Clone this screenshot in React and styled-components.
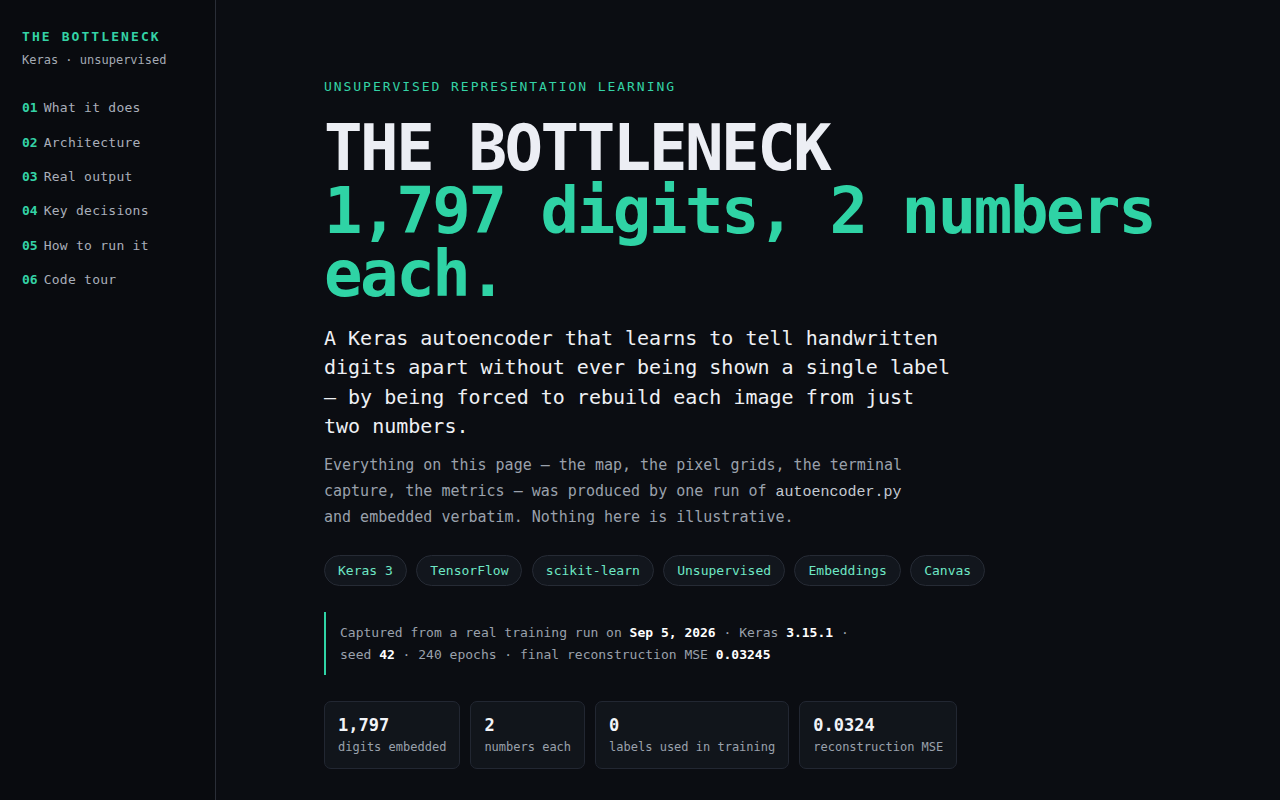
import React from "react";
import styled, { createGlobalStyle } from "styled-components";

const Global = createGlobalStyle`
  html, body { margin: 0; padding: 0; background: #0b0d12; }
  body { font-family: "DejaVu Sans Mono", monospace; color: #e6e8ee; }
  * { box-sizing: border-box; }
`;

const Shell = styled.div`
  display: flex;
  min-height: 800px;
  height: 800px;
  overflow: hidden;
`;

const Sidebar = styled.aside`
  width: 216px;
  flex: none;
  background: #090b0f;
  border-right: 1px solid #2a2e37;
  padding: 28px 0 0 22px;
`;

const Brand = styled.div`
  font-size: 13px;
  font-weight: 700;
  letter-spacing: 0.16em;
  color: #34d3a6;
  line-height: 18px;
`;

const BrandSub = styled.div`
  margin-top: 5px;
  font-size: 12px;
  line-height: 18px;
  color: #a4aab4;
`;

const Nav = styled.nav`
  margin-top: 22px;
  display: flex;
  flex-direction: column;
`;

const NavItem = styled.a`
  display: flex;
  gap: 6px;
  font-size: 13px;
  line-height: 19.5px;
  padding: 7.4px 0;
  color: #a9afba;
  letter-spacing: 0.02em;
  text-decoration: none;
`;

const NavNum = styled.span`
  color: #34d3a6;
  font-weight: 700;
  letter-spacing: 0;
`;

const Main = styled.main`
  flex: 1;
  padding: 78px 0 0 108px;
`;

const Eyebrow = styled.div`
  font-size: 13px;
  line-height: 18px;
  letter-spacing: 0.15em;
  color: #34d3a6;
`;

const Title = styled.h1`
  margin: 21px 0 0;
  font-size: 64px;
  line-height: 63px;
  font-weight: 700;
  letter-spacing: -0.038em;
  color: #eceef4;
`;

const Accent = styled.span`
  display: block;
  color: #2fd3a5;
`;

const Lede = styled.p`
  margin: 18px 0 0;
  width: 630px;
  font-size: 20px;
  line-height: 29.3px;
  color: #eef0f4;
`;

const Body = styled.p`
  margin: 12px 0 0;
  width: 600px;
  font-size: 15px;
  line-height: 25.5px;
  color: #9aa1ac;
`;

const Code = styled.code`
  font-family: "Liberation Mono", monospace;
  font-size: 15px;
  color: #c4c9d1;
`;

const Tags = styled.div`
  display: flex;
  gap: 9.4px;
  margin-top: 24px;
`;

const Tag = styled.span`
  display: inline-flex;
  align-items: center;
  height: 31px;
  padding: 0 13px;
  border: 1px solid #262b35;
  border-radius: 16px;
  background: #12161d;
  font-size: 13px;
  color: #6ee7c5;
`;

const Note = styled.div`
  margin-top: 26px;
  border-left: 2px solid #2fd3a5;
  padding: 10px 14px 9px;
  font-size: 13px;
  line-height: 22px;
  color: #9aa1ac;
  width: 560px;
`;

const Strong = styled.b`
  color: #ffffff;
  font-weight: 700;
`;

const Stats = styled.div`
  display: flex;
  gap: 10px;
  margin-top: 26px;
`;

const Stat = styled.div`
  border: 1px solid #222732;
  border-radius: 7px;
  background: #11151b;
  padding: 12px 13px 11px;
  display: flex;
  flex-direction: column;
`;

const StatValue = styled.div`
  font-size: 17px;
  line-height: 22px;
  font-weight: 700;
  color: #f2f4f8;
`;

const StatLabel = styled.div`
  margin-top: 1px;
  font-size: 12px;
  line-height: 20px;
  color: #9aa1ac;
`;

const navItems = [
  ["01", "What it does"],
  ["02", "Architecture"],
  ["03", "Real output"],
  ["04", "Key decisions"],
  ["05", "How to run it"],
  ["06", "Code tour"],
];

const tags = ["Keras 3", "TensorFlow", "scikit-learn", "Unsupervised", "Embeddings", "Canvas"];

const stats = [
  ["1,797", "digits embedded"],
  ["2", "numbers each"],
  ["0", "labels used in training"],
  ["0.0324", "reconstruction MSE"],
];

export default function App() {
  return (
    <>
      <Global />
      <Shell>
        <Sidebar>
          <Brand>THE BOTTLENECK</Brand>
          <BrandSub>Keras · unsupervised</BrandSub>
          <Nav>
            {navItems.map(([n, t]) => (
              <NavItem key={n} href={`#s${n}`}>
                <NavNum>{n}</NavNum>
                <span>{t}</span>
              </NavItem>
            ))}
          </Nav>
        </Sidebar>
        <Main>
          <Eyebrow>UNSUPERVISED REPRESENTATION LEARNING</Eyebrow>
          <Title>
            THE BOTTLENECK
            <Accent>1,797 digits, 2 numbers each.</Accent>
          </Title>
          <Lede>
            A Keras autoencoder that learns to tell handwritten digits apart without ever being
            shown a single label — by being forced to rebuild each image from just two numbers.
          </Lede>
          <Body>
            Everything on this page — the map, the pixel grids, the terminal capture, the metrics
            — was produced by one run of <Code>autoencoder.py</Code> and embedded verbatim.
            Nothing here is illustrative.
          </Body>
          <Tags>
            {tags.map((t) => (
              <Tag key={t}>{t}</Tag>
            ))}
          </Tags>
          <Note>
            {"Captured from a real training run on "}
            <Strong>Sep 5, 2026</Strong>
            {" · Keras "}
            <Strong>3.15.1</Strong>
            {" ·"}
            <br />
            {"seed "}
            <Strong>42</Strong>
            {" · 240 epochs · final reconstruction MSE "}
            <Strong>0.03245</Strong>
          </Note>
          <Stats>
            {stats.map(([v, l]) => (
              <Stat key={l}>
                <StatValue>{v}</StatValue>
                <StatLabel>{l}</StatLabel>
              </Stat>
            ))}
          </Stats>
        </Main>
      </Shell>
    </>
  );
}
